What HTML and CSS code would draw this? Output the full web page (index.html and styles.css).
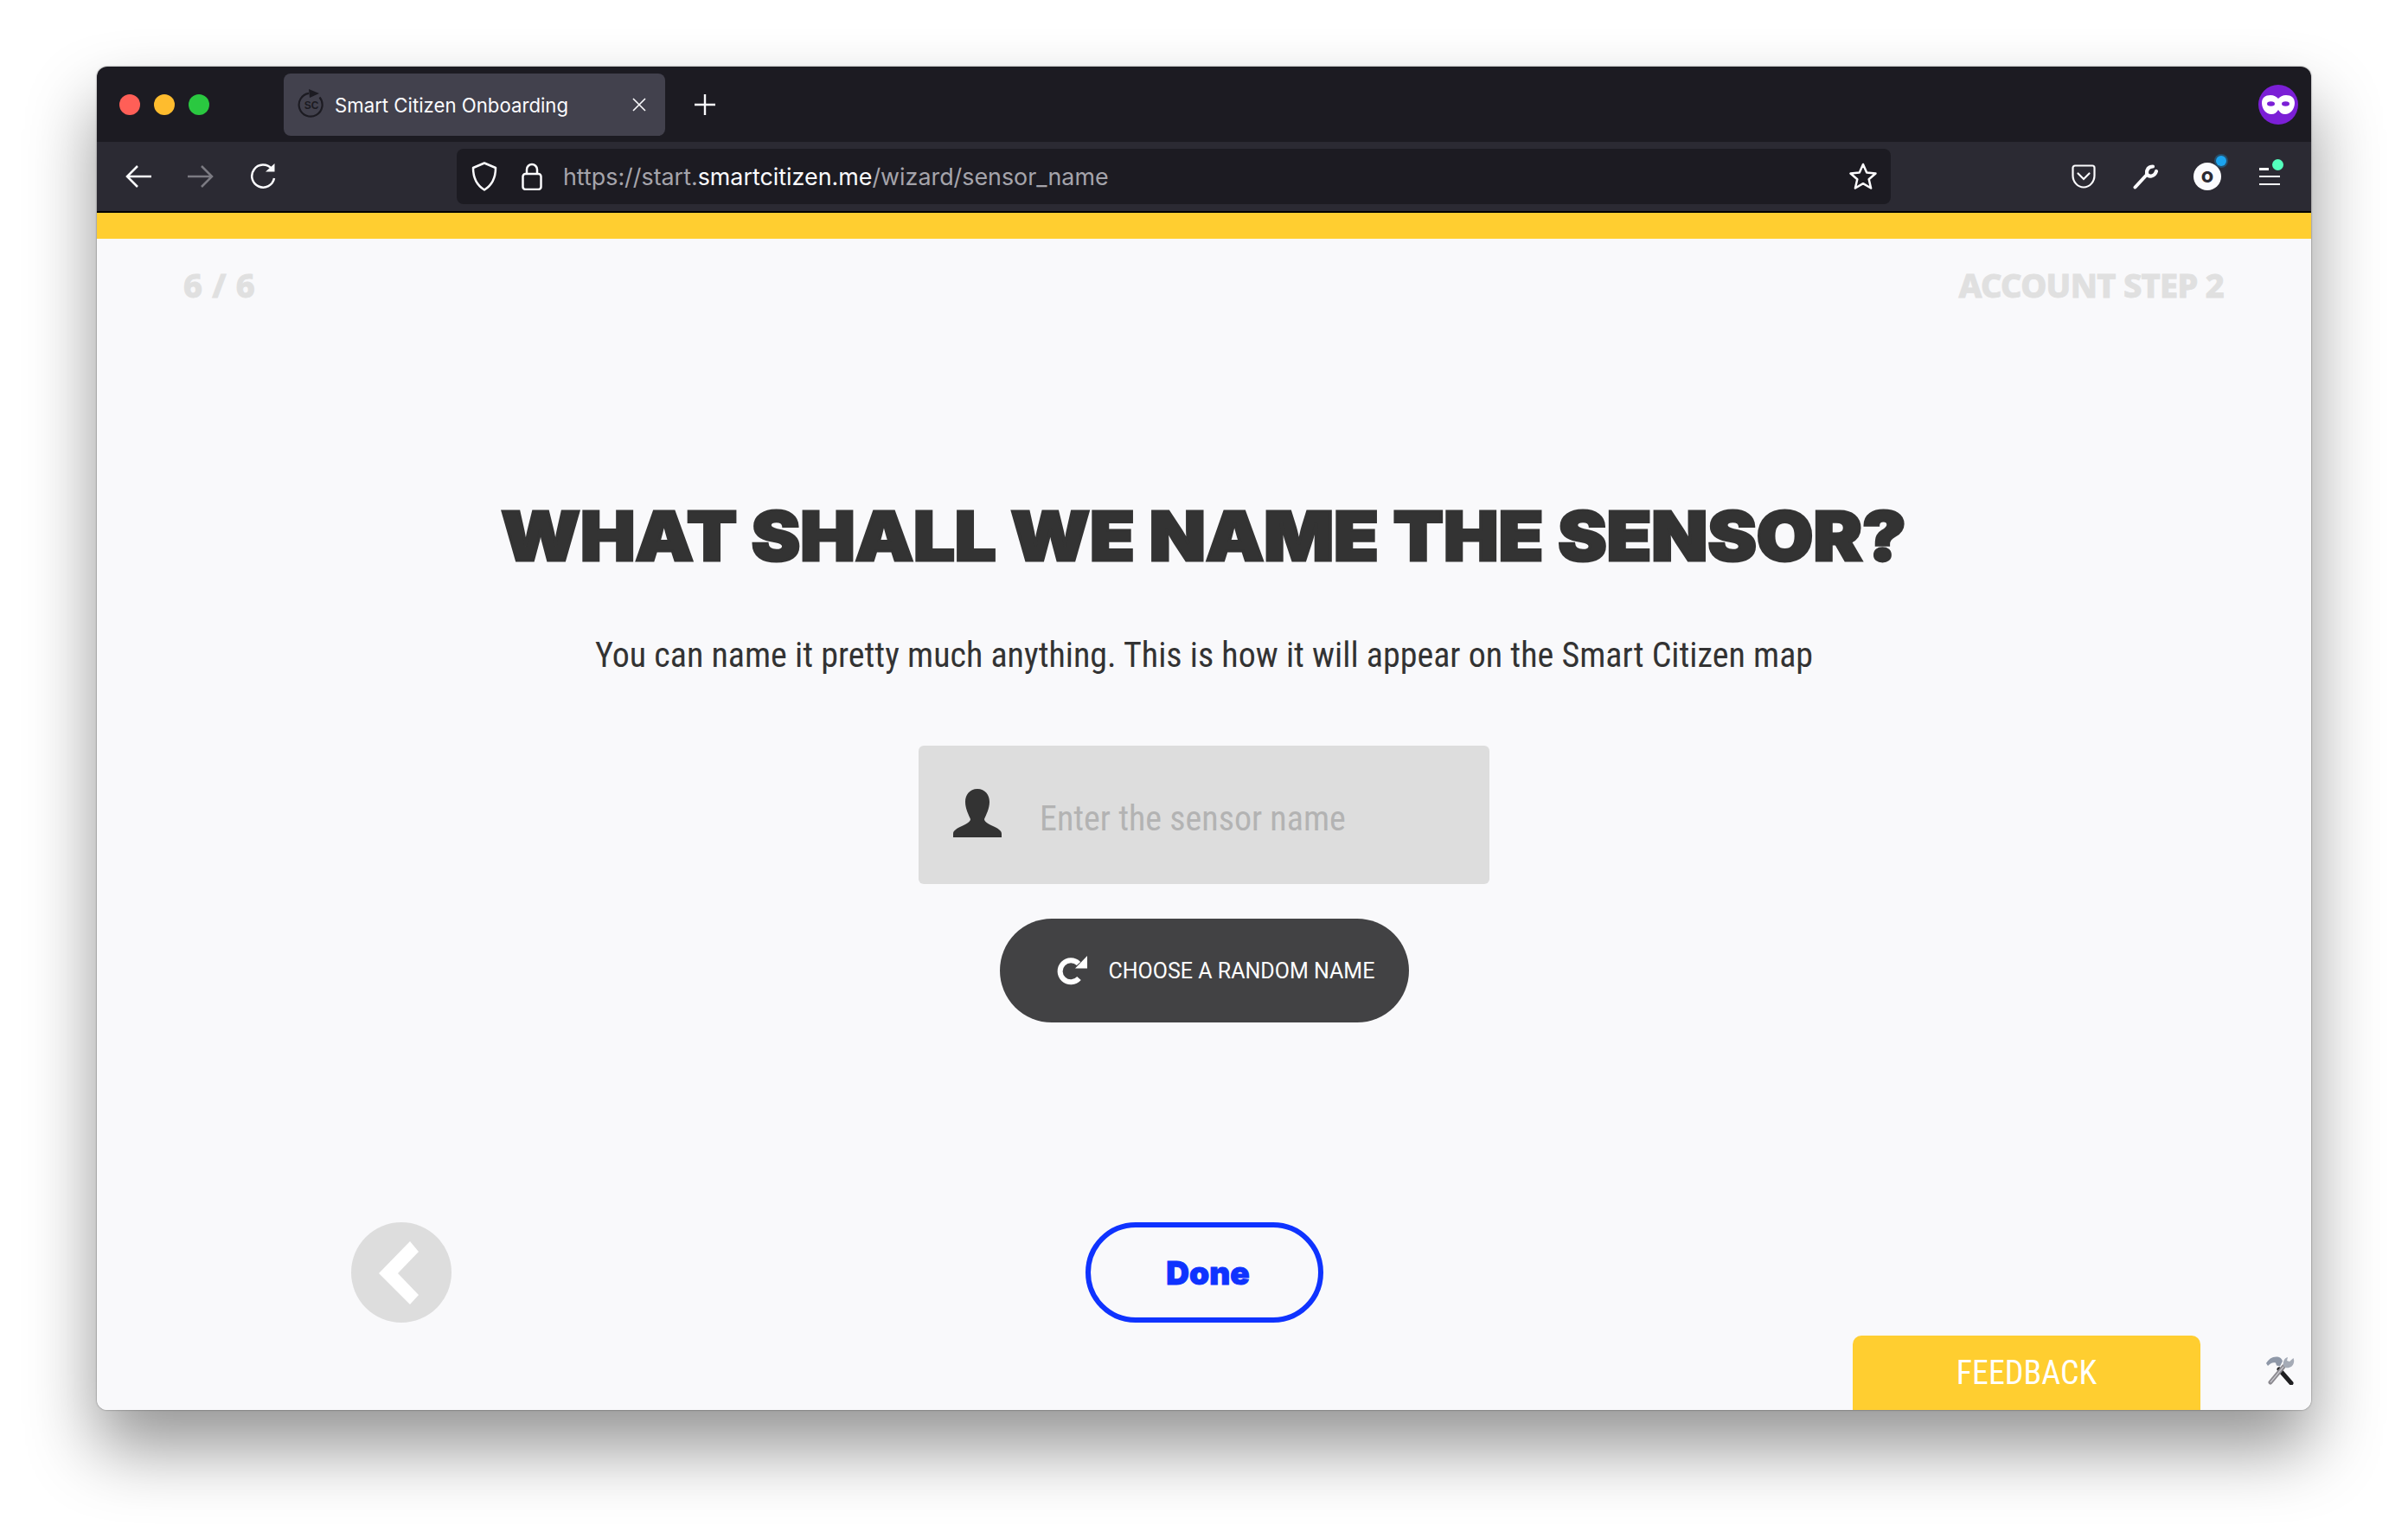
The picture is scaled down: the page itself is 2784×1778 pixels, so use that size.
FILE: index.html
```html
<!DOCTYPE html>
<html lang="en">
<head>
<meta charset="utf-8">
<title>Smart Citizen Onboarding</title>
<link rel="stylesheet" href="styles.css">
</head>
<body>
<div class="window">
  <div class="tabbar">
    <span class="light red"></span><span class="light amber"></span><span class="light green"></span>
    <div class="tab">
      <svg class="tab-icon" viewBox="0 0 32 36" fill="none" stroke="#1c1b22" stroke-width="2.200"><path d="M25.500 9.500A13.500 13.500 0 1 1 13 4.800"/><path d="M13 0l12 5-11 5z" fill="#1c1b22" stroke="none"/><text x="16" y="22.500" class="tab-icon-text" fill="#1c1b22" stroke="none" text-anchor="middle">SC</text></svg>
      <span class="tab-title">Smart Citizen Onboarding</span>
      <svg class="tab-close" viewBox="0 0 16 16" stroke="#fbfbfe" stroke-width="1.600"><path d="M1 1l14 14M15 1L1 15"/></svg>
    </div>
    <svg class="new-tab" viewBox="0 0 24 24" stroke="#fbfbfe" stroke-width="2.400"><path d="M12 0v24M0 12h24"/></svg>
    <div class="avatar">
      <svg viewBox="0 0 38 22" class="mask"><path d="M10 0c4 0 7 2 9 4 2-2 5-4 9-4 6 0 10 3 10 9 0 7-5 13-11 13-4 0-6-2-8-5-2 3-4 5-8 5C5 22 0 16 0 9 0 3 4 0 10 0z" fill="#fff"/><ellipse cx="10.500" cy="10" rx="4.500" ry="2.800" fill="#7b1fd6"/><ellipse cx="27.500" cy="10" rx="4.500" ry="2.800" fill="#7b1fd6"/></svg>
    </div>
  </div>
  <div class="toolbar">
    <svg class="nav-icon" viewBox="0 0 30 26" fill="none" stroke="#fbfbfe" stroke-width="2.500"><path d="M14 1L2 13l12 12M2 13h28"/></svg>
    <svg class="nav-icon forward" viewBox="0 0 30 26" fill="none" stroke="#7b7a82" stroke-width="2.500"><path d="M16 1l12 12-12 12M28 13H0"/></svg>
    <svg class="nav-icon reload" viewBox="0 0 30 30" fill="none" stroke="#fbfbfe" stroke-width="2.500"><path d="M25 6A13 13 0 1 0 28 17"/><path d="M18 9.500h10.500V0z" fill="#fbfbfe" stroke="none"/></svg>
    <div class="urlbar">
      <svg class="shield" viewBox="0 0 30 34" fill="none" stroke="#fbfbfe" stroke-width="2.500"><path d="M15 1.500L28 7c0 12-4 20-13 25.500C6 27 2 19 2 7z" stroke-linejoin="round"/></svg>
      <svg class="lock" viewBox="0 0 24 32" fill="none" stroke="#fbfbfe" stroke-width="2.500"><path d="M6 13V8a6 6 0 0 1 12 0v5"/><rect x="1.500" y="13" width="21" height="18" rx="3"/></svg>
      <span class="url"><span class="url-dim">https://start.</span>smartcitizen.me<span class="url-dim">/wizard/sensor_name</span></span>
      <svg class="star" viewBox="0 0 32 32" fill="none" stroke="#fbfbfe" stroke-width="2.500" stroke-linejoin="round"><path d="M16 2l4.200 9.500 10.300 1-7.800 6.800 2.400 10.200L16 24.200 6.900 29.500l2.400-10.200L1.500 12.500l10.300-1z"/></svg>
    </div>
    <svg class="tool pocket" viewBox="0 0 28 28" fill="none" stroke="#fbfbfe" stroke-width="2.200"><path d="M4 1.500h20A2.500 2.500 0 0 1 26.500 4v9c0 7-5.500 13.500-12.500 13.500S1.500 20 1.500 13V4A2.500 2.500 0 0 1 4 1.500z"/><path d="M7.500 10.500L14 17l6.500-6.500" stroke-linecap="round"/></svg>
    <svg class="tool wrench" viewBox="0 0 30 30" fill="none" stroke="#fbfbfe" stroke-linecap="round"><path d="M2.500 27.500L15 14" stroke-width="4"/><path d="M23 3.500C18 3.500 15.500 7 16 12c2 4 9 3.500 11-3" stroke-width="4.200"/></svg>
    <div class="counter"><span class="counter-num">O</span><span class="counter-dot"></span></div>
    <div class="menu"><span class="menu-line short"></span><span class="menu-line"></span><span class="menu-line"></span><span class="menu-dot"></span></div>
  </div>
  <div class="topline"></div>
  <main class="page">
    <div class="steps"><span class="steps-left">6 / 6</span><span class="steps-right">ACCOUNT STEP 2</span></div>
    <h1 class="title">WHAT SHALL WE NAME THE SENSOR?</h1>
    <p class="lead"><span class="narrow lead-text">You can name it pretty much anything. This is how it will appear on the Smart Citizen map</span></p>
    <div class="field">
      <svg class="person" viewBox="0 0 56 56"><path d="M28 0C37 0 42 7 42 15 42 23 38 30 36 35 36 38 40 40 46 43 52 46 56 48 56 52V56H0V52C0 48 4 46 10 43 16 40 20 38 20 35 18 30 14 23 14 15 14 7 19 0 28 0Z" fill="#333"/></svg>
      <span class="narrow placeholder">Enter the sensor name</span>
    </div>
    <button class="random">
      <svg class="random-icon" viewBox="0 0 35 34" fill="none"><path d="M25 9A12.500 12.500 0 1 0 25.500 26" stroke="#fff" stroke-width="6"/><path d="M35 0v14.500H21z" fill="#fff"/></svg>
      <span>CHOOSE A RANDOM NAME</span>
    </button>
    <div class="actions">
      <div class="back"><svg class="chevron" viewBox="0 0 46 73"><path d="M36 0l10 12-24 25 24 25-10 11L0 37z" fill="#fff"/></svg></div>
      <button class="done">Done</button>
    </div>
    <div class="feedback"><span class="narrow feedback-text">FEEDBACK</span></div>
    <svg class="tools-emoji" viewBox="0 0 34 33">
      <path d="M16 15L30 31" stroke="#1f1f21" stroke-width="5" stroke-linecap="round"/>
      <path d="M6 30L21 12" stroke="#8a888e" stroke-width="5" stroke-linecap="round"/>
      <path d="M21 12L6 30" stroke="#c9c9cf" stroke-width="1.200"/>
      <path d="M1 8C4 3 8 0 14 .5c3 .5 5 2 6 5l-3 6-4-1-1-3c-3-1-6 0-9 3.500z" fill="#8f98a8"/>
      <path d="M26 1c-4 1-6 5-5 10l2 2c5 1 9-1 10-6 .500-2 0-3-.500-5l-4.500 4-3-1z" fill="#a5abb6"/>
    </svg>
  </main>
</div>
</body>
</html>
```
FILE: styles.css
```css
* { box-sizing: border-box; }
html, body { margin: 0; background: #fff; }
body { padding: 77px 112px 0; height: 1778px; overflow: hidden; font-family: "Inter", sans-serif; }
.window {
  width: 2560px; height: 1553px; display: flex; flex-direction: column;
  border-radius: 12px; overflow: hidden;
  box-shadow: 0 0 2px rgba(0,0,0,.55), 0 44px 80px rgba(0,0,0,.42);
}
.tabbar { height: 87px; flex: none; background: #1c1b22; display: flex; align-items: center; padding-left: 26px; }
.light { width: 24px; height: 24px; border-radius: 50%; margin-right: 16px; flex: none; }
.red { background: #ff5f57; } .amber { background: #febc2e; } .green { background: #2ac840; }
.tab { width: 441px; height: 72px; margin-left: 70px; background: #42414d; border-radius: 8px; display: flex; align-items: center; padding-left: 16px; color: #fbfbfe; }
.tab-icon { width: 32px; height: 36px; flex: none; }
.tab-icon-text { font: 700 12px "Liberation Sans Narrow", "Liberation Sans", sans-serif; }
.tab-title { font-size: 22.200px; margin-left: 11px; white-space: nowrap; position: relative; top: 1px; }
.tab-close { width: 16px; height: 16px; margin-left: 74px; flex: none; }
.new-tab { width: 24px; height: 24px; margin-left: 34px; flex: none; }
.avatar { width: 46px; height: 46px; border-radius: 50%; background: #7b1fd6; margin-left: auto; margin-right: 15px; display: flex; align-items: center; justify-content: center; flex: none; }
.mask { width: 38px; height: 22px; }
.toolbar { height: 80px; flex: none; background: #2b2a33; display: flex; align-items: center; padding-left: 33px; }
.nav-icon { width: 30px; height: 26px; flex: none; }
.forward { margin-left: 42px; }
.reload { margin-left: 42px; height: 30px; }
.urlbar { width: 1658px; height: 64px; margin-left: 209px; background: #1c1b22; border-radius: 8px; display: flex; align-items: center; padding-left: 17px; flex: none; }
.shield { width: 30px; height: 34px; flex: none; }
.lock { width: 24px; height: 32px; margin-left: 28px; flex: none; }
.url { font-size: 26.850px; color: #fbfbfe; margin-left: 24px; white-space: nowrap; }
.url-dim { color: #a5a4ab; }
.star { width: 32px; height: 32px; margin-left: auto; margin-right: 16px; flex: none; }
.tool { flex: none; }
.pocket { width: 28px; height: 28px; margin-left: 209px; }
.wrench { width: 30px; height: 30px; margin-left: 43px; }
.counter { position: relative; width: 32px; height: 32px; margin-left: 40px; border-radius: 50%; background: #fbfbfe; display: flex; align-items: center; justify-content: center; flex: none; }
.counter-num { font-size: 18px; font-weight: 900; color: #2b2a33; }
.counter-dot { position: absolute; right: -6px; top: -8px; width: 12px; height: 12px; border-radius: 50%; background: #1ba3ee; box-shadow: 0 0 0 2px rgba(27,163,238,.3); }
.menu { position: relative; width: 24px; height: 20px; margin-left: 44px; display: flex; flex-direction: column; justify-content: space-between; flex: none; }
.menu-line { display: block; height: 2.500px; width: 24px; background: #fbfbfe; }
.menu-line.short { width: 11px; }
.menu-dot { position: absolute; right: -4px; top: -10px; width: 13px; height: 13px; border-radius: 50%; background: #54ffbd; }
.topline { height: 32px; flex: none; background: #ffce30; border-top: 2px solid #000; }
.page { position: relative; flex: 1; background: #f9f9fb; display: flex; flex-direction: column; align-items: center; color: #333; }
.steps { width: 100%; padding: 26px 101px 0 100px; display: flex; justify-content: space-between; font-family: "Noto Sans", sans-serif; font-weight: 800; font-size: 38px; line-height: 54px; color: #e0e0e0; -webkit-text-stroke: .8px #e0e0e0; }
.steps-left { letter-spacing: .7px; }
.steps-right { letter-spacing: -.7px; }
.title { margin: 216px 0 0; font-family: "Inter", sans-serif; font-weight: 900; font-size: 78px; line-height: 96px; white-space: nowrap; -webkit-text-stroke: 3px #333; color: #333; transform: scaleX(1.085); }
.narrow { font-family: "Liberation Sans Narrow", "Roboto Condensed", "Roboto", sans-serif; font-stretch: condensed; }
.lead { margin: 61px 0 0; font-size: 40px; line-height: 56px; white-space: nowrap; }
.field { width: 660px; height: 160px; margin-top: 76px; background: #ddd; border-radius: 6px; display: flex; align-items: center; padding-left: 40px; }
.person { width: 56px; height: 56px; margin-top: -4px; flex: none; }
.placeholder { font-size: 40px; color: #b3b3b3; margin-left: 44px; margin-top: 8px; }
.random { width: 473px; height: 120px; margin-top: 40px; border: 0; border-radius: 60px; background: #424244; color: #fff; display: flex; align-items: center; padding: 0 0 0 66px; font-family: "Roboto", sans-serif; font-size: 25px; }
.random-icon { width: 35px; height: 34px; margin-right: 25px; flex: none; }
.actions { width: 100%; margin-top: 231px; display: flex; justify-content: flex-start; padding-left: 294px; }
.back { width: 116px; height: 116px; border-radius: 50%; background: #ddd; position: relative; display: flex; align-items: center; justify-content: center; flex: none; }
.chevron { width: 46px; height: 73px; margin-left: -6px; }
.done { width: 275px; height: 116px; margin-left: 733px; padding: 0 0 0 8px; border: 6px solid #0f33ff; border-radius: 58px; background: transparent; color: #0f33ff; font-family: "Inter", sans-serif; font-weight: 900; font-size: 37px; -webkit-text-stroke: 1px #0f33ff; flex: none; }
.feedback { position: absolute; right: 128px; bottom: 0; width: 402px; height: 86px; background: #ffce30; border-radius: 10px 10px 0 0; display: flex; align-items: center; justify-content: center; color: #fff; }
.feedback-text { font-size: 38px; }
.tools-emoji { position: absolute; right: 19px; bottom: 29px; width: 34px; height: 33px; }
```
